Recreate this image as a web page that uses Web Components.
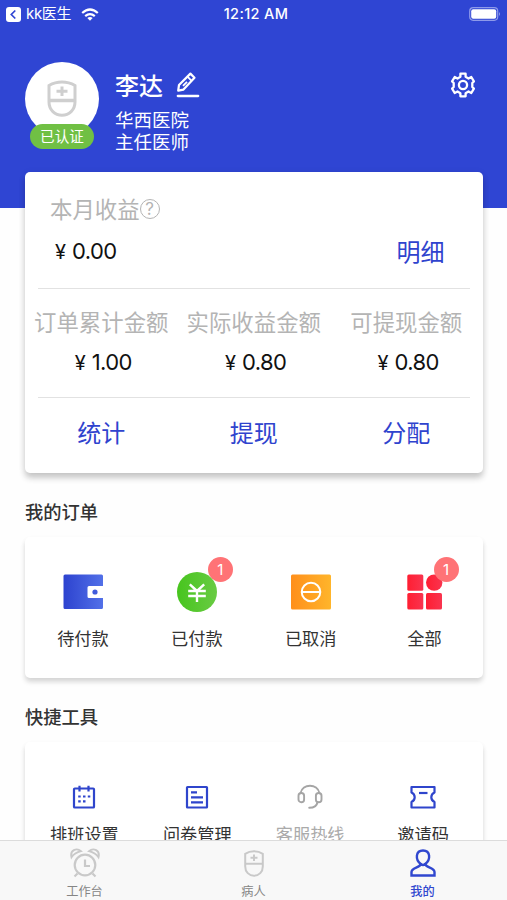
<!DOCTYPE html>
<html lang="zh-CN">
<head>
<meta charset="utf-8">
<title>我的</title>
<style>
html,body{margin:0;padding:0;background:#fefefe}
body{font-family:"Noto Sans CJK SC",sans-serif;color:#333}
</style>
</head>
<body>
<doctor-app></doctor-app>
<script>
const define = (name, html) => customElements.define(name, class extends HTMLElement {
  constructor() {
    super();
    const t = document.createElement('template');
    t.innerHTML = html.replace(/\{\{(\w+)\}\}/g, (_, k) => this.getAttribute(k) || '');
    this.attachShadow({ mode: 'open' }).append(t.content.cloneNode(true));
  }
});

const icons = {
  back: [15, 15, `<rect width="15" height="15" rx="3" fill="#fff"/><path d="M9.300 3.500L5.300 7.500L9.300 11.500" fill="none" stroke="#3045d3" stroke-width="1.700"/>`],
  wifi: [18, 13, `<g fill="none" stroke="#fff" stroke-width="2.200"><path d="M1.200 5Q9-2 16.800 5"/><path d="M4.200 8.200Q9 4 13.800 8.200"/></g><path d="M6.300 10.100Q9 8 11.700 10.100L9 12.800Z" fill="#fff"/>`],
  battery: [32, 14, `<rect x=".7" y=".7" width="28" height="12.600" rx="3.500" fill="none" stroke="#8e9aea" stroke-width="1.200"/><rect x="2.200" y="2.300" width="25" height="9.400" rx="2" fill="#fff"/><path d="M30 5Q32 7 30 9Z" fill="#8e9aea"/>`],
  edit: [24, 26, `<g fill="none" stroke="#fff" stroke-width="2.200" stroke-linejoin="round"><path d="M2.200 18.600L3 13L14.400 1.600L18.500 5.700L7.500 17.600Z"/><path d="M11.500 4.700L15.600 8.800M7 13.900L11 9.900" stroke-width="1.800"/><path d="M1.800 24H22.200" stroke-width="2.300" stroke-linecap="round"/></g>`],
  gear: [26, 26, `<g fill="none" stroke="#fff" stroke-width="2.300" stroke-linejoin="round"><path d="M10.400 1.700H15.600V4.800L18.500 6.500L21.300 5L23.900 9.400L22.300 11V15L23.900 16.600L21.300 21L18.500 19.500L15.600 21.200V24.300H10.400V21.200L7.500 19.500L4.700 21L2.100 16.600L3.700 15V11L2.100 9.400L4.700 5L7.500 6.500L10.400 4.800Z"/><circle cx="13" cy="13" r="4.100"/></g>`],
  wallet: [40, 36, `<defs><linearGradient id="g"><stop stop-color="#2d43cf"/><stop offset="1" stop-color="#5270e8"/></linearGradient></defs><path d="M2 .5H38.500Q40 .5 40 2V12H26Q24.500 12 24.500 13.500V22.500Q24.500 24 26 24H40V33.500Q40 35 38.500 35H2Q.5 35 .5 33.500V2Q.5 .5 2 .5Z" fill="url(#g)"/><circle cx="32" cy="18" r="2.600" fill="#405bdc"/>`],
  paid: [40, 40, `<defs><linearGradient id="g"><stop stop-color="#47c51e"/><stop offset="1" stop-color="#69cb43"/></linearGradient></defs><circle cx="20" cy="20" r="20" fill="url(#g)"/><path d="M12.800 12.300L20 19L27.200 12.300M11.200 19H28.800M11.200 24H28.800M20 19V30" fill="none" stroke="#fff" stroke-width="2.400"/>`],
  cancel: [40, 36, `<defs><linearGradient id="g"><stop stop-color="#ff8f1b"/><stop offset="1" stop-color="#ffb52b"/></linearGradient></defs><rect y=".5" width="40" height="35" rx="1.500" fill="url(#g)"/><g fill="none" stroke="#fff" stroke-width="2"><circle cx="20" cy="18" r="9.300"/><path d="M11 18H29"/></g>`],
  all: [36, 36, `<defs><linearGradient id="g"><stop stop-color="#ff1e32"/><stop offset="1" stop-color="#f9344f"/></linearGradient></defs><g fill="url(#g)"><rect x=".3" y=".5" width="16" height="16.300" rx="1.500"/><rect x=".3" y="19" width="16" height="16.500" rx="1.500"/><rect x="19" y="19" width="16" height="16.500" rx="1.500"/><circle cx="27.200" cy="8.600" r="8.200"/></g>`],
  calendar: [24, 24, `<g fill="none" stroke="#2f45cc" stroke-width="2.200"><rect x="2" y="3.500" width="20" height="19" rx=".8"/><path d="M7.500 .7V6.500M16.500 .7V6.500M6.200 11.500H8.700M11 11.500H13.500M15.800 11.500H18.300M6.200 16.300H8.700M11 16.300H13.500"/></g>`],
  form: [24, 24, `<g fill="none" stroke="#2f45cc" stroke-width="2.200"><rect x="2" y="2" width="20" height="20.500" rx=".5"/><path d="M6 7.300H12M6 12.300H18M6 17.300H18"/></g>`],
  headset: [26, 26, `<g fill="none" stroke="#a5a5a5" stroke-width="1.900"><rect x="1.500" y="9" width="5.600" height="9.200" rx="2.800"/><rect x="18.900" y="9" width="5.600" height="9.200" rx="2.800"/><path d="M3.500 9.300C5.500-.8 20.500-.8 22.500 9.300M20.500 18C20 21.700 17.500 23.800 12.200 23.800" stroke-linecap="round"/></g>`],
  ticket: [26, 24, `<g fill="none" stroke="#2f45cc" stroke-width="2.200" stroke-linejoin="round"><path d="M1.500 2H24.500V7.500Q21.300 9 21.300 12.200T24.500 17V22.500H1.500V17Q4.700 15.400 4.700 12.200Q4.700 9 1.500 7.500Z"/><path d="M9 8H17.500"/></g>`.replace('T24.500 17', 'Q21.300 15.400 24.500 17')],
  alarm: [30, 30, `<g fill="none" stroke="#c9c9c9" stroke-width="2.200"><circle cx="15" cy="17" r="10.300"/><path d="M15 11.500V18H20M7.500 25.500L4.500 28.500M22.500 25.500L25.500 28.500"/><path d="M1.500 9.200C-.3 2.500 6.500-.8 11 3.200Q4.500 5 1.500 9.200ZM28.500 9.200C30.300 2.500 23.500-.8 19 3.200Q25.500 5 28.500 9.200Z" stroke-width="1.900"/></g>`],
  avatar: [30, 37, `<g fill="none" stroke="#cfcfcf" stroke-width="3"><path d="M2 5.500Q8 2 15 2T28 5.500V22C28 30 22 35.200 15 35.200S2 30 2 22Z"/><path d="M2 20.500H28" stroke-width="3.500"/><path d="M15 6.500V16M9.500 11.300H20.500"/></g>`],
  patient: [20, 27, `<g fill="none" stroke="#c9c9c9" stroke-width="2"><path d="M1.200 3.800Q5 1.200 10 1.200T18.800 3.800V16.500C18.800 22 15 25.700 10 25.700S1.200 22 1.200 16.500Z"/><path d="M1.200 13.700H18.800M10 4.500V11M6.500 7.800H13.500"/></g>`],
  person: [26, 28, `<path d="M10.800 15C5 10.500 5.500 1.500 13 1.500S21 10.500 15.200 15C16 19 24.500 18.500 24.500 23V26.500H1.500V23C1.500 18.500 10 19 10.800 15ZM10.800 15Q13 17 15.200 15" fill="none" stroke="#3047cf" stroke-width="2.400"/>`]
};

customElements.define('ui-icon', class extends HTMLElement {
  constructor() {
    super();
    const [w, h, art] = icons[this.getAttribute('name')];
    this.attachShadow({ mode: 'open' }).innerHTML =
      `<style>:host{display:block;flex:none}svg{display:block}</style>
       <svg width="${w}" height="${h}" viewBox="0 0 ${w} ${h}">${art}</svg>`;
  }
});

define('status-bar', `
<style>
:host{display:grid;grid-template-columns:1fr auto 1fr;align-items:center;height:28px;padding:0 6px;color:#fff;font:15px/28px Inter,"Noto Sans CJK SC",sans-serif;box-sizing:border-box}
.left{display:flex;align-items:center;gap:5px}
.left span{letter-spacing:-.3px}
.left ui-icon:last-child{margin-left:5px}
.time{font-weight:500;font-size:14.500px;letter-spacing:.35px;padding-left:5px}
.right{justify-self:end}
</style>
<div class="left"><ui-icon name="back"></ui-icon><span>kk医生</span><ui-icon name="wifi"></ui-icon></div>
<div class="time">12:12 AM</div><ui-icon class="right" name="battery"></ui-icon>`);

define('profile-header', `
<style>
:host{display:flex;height:144px;padding:34px 31px 0 25px;box-sizing:border-box;color:#fff}
.photo{position:relative;width:74px;height:74px;border-radius:50%;background:#fff;display:flex;justify-content:center;padding-top:18px;box-sizing:border-box}
.tag{position:absolute;left:5px;top:62px;width:64px;height:25px;border-radius:13px;background:#70c044;font-size:14.600px;line-height:24px;text-align:center}
.info{flex:1;margin-left:16px}
.name{display:flex;align-items:center;gap:13px;height:45px;margin-bottom:1px;font-size:24px;line-height:45px;font-weight:500}
.line{font-size:18.500px;line-height:22px;height:22px}
.gear{margin-top:10px}
</style>
<div class="photo"><ui-icon name="avatar"></ui-icon><div class="tag"><slot name="tag"></slot></div></div>
<div class="info"><div class="name"><slot name="name"></slot><ui-icon name="edit"></ui-icon></div>
<div class="line"><slot name="hospital"></slot></div><div class="line"><slot name="title"></slot></div></div>
<ui-icon class="gear" name="gear"></ui-icon>`);

define('money-amount', `
<style>
:host{display:flex;justify-content:center;align-items:baseline;gap:6px;font:22px/30px Inter,sans-serif;letter-spacing:-.6px;color:#111}
.yen{font-size:20px;letter-spacing:0}
</style><span class="yen">¥</span><span><slot></slot></span>`);

define('metric-cell', `
<style>
:host{display:flex;flex-direction:column;align-items:center}
.label{font-size:22.400px;line-height:32px;color:#b4b4b4;white-space:nowrap}
money-amount{margin-top:10px;padding-left:4px}
</style><div class="label">{{label}}</div><money-amount><slot></slot></money-amount>`);

define('income-card', `
<style>
:host{display:block;margin:0 24.500px 0 25px;height:301px;background:#fff;border-radius:5px;box-shadow:0 5px 6px rgba(0,0,0,.2),0 1px 8px rgba(0,0,0,.06);box-sizing:border-box;padding-top:19px}
.month{display:flex;align-items:center;padding-left:25px;height:34px;font-size:22.400px;color:#b4b4b4}
.q{width:18px;height:18px;margin-top:2px;border:1.300px solid #b4b4b4;border-radius:50%;font:17px/18px Inter,sans-serif;text-align:center}
.sum{display:flex;justify-content:space-between;align-items:center;height:50px;margin-top:1px;padding:0 38px 0 30px}
.link{font-size:24px;line-height:34px;color:#2f43ce}
.sum .link{margin-top:-1px}
hr{border:0;height:1px;background:#e2e2e2;margin:0 13px}
.hr1{margin-top:12px}
.grid{display:grid;grid-template-columns:repeat(3,1fr)}
.metrics{height:108px;padding-top:16px;box-sizing:border-box}
.links{padding-top:17px;text-align:center}
</style>
<div class="month"><span>本月收益</span><span class="q">?</span></div>
<div class="sum"><money-amount>0.00</money-amount><span class="link">明细</span></div>
<hr class="hr1">
<div class="grid metrics"><metric-cell label="订单累计金额">1.00</metric-cell><metric-cell label="实际收益金额">0.80</metric-cell><metric-cell label="可提现金额">0.80</metric-cell></div>
<hr>
<div class="grid links"><span class="link">统计</span><span class="link">提现</span><span class="link">分配</span></div>`);

define('panel-section', `
<style>
:host{display:block;margin:0 24.500px 0 25px}
h2{margin:0;font-size:18.300px;line-height:28px;font-weight:500;color:#333}
.card{display:grid;grid-template-columns:repeat(4,1fr);margin-top:12px;height:var(--card-h);padding:0 var(--pad,1px);background:#fff;border-radius:5px;box-shadow:0 4px 5px rgba(0,0,0,.14),0 2px 6px rgba(0,0,0,.03);box-sizing:border-box}
</style><h2>{{heading}}</h2><div class="card"><slot></slot></div>`);

define('grid-item', `
<style>
:host{display:flex;flex-direction:column;align-items:center;padding-top:35px;font-size:17.200px;color:#333}
.art{position:relative;height:40px;display:flex;align-items:center}
.label{margin-top:var(--gap,13px);line-height:26px;white-space:nowrap}
::slotted(b){position:absolute;left:calc(100% - 9px);top:-15px;width:25px;height:25px;border-radius:50%;background:#ff7376;color:#fff;font:400 15px/25px Inter,sans-serif;text-align:center}
</style><div class="art"><ui-icon name="{{icon}}"></ui-icon><slot name="badge"></slot></div><div class="label"><slot></slot></div>`);

define('tab-item', `
<style>
:host{display:flex;flex-direction:column;align-items:center;font-size:12.200px;color:#858585}
.art{height:30px;margin-top:7px;display:flex;align-items:center}
.label{line-height:18px;margin-top:4px}
</style><div class="art"><ui-icon name="{{icon}}"></ui-icon></div><div class="label"><slot></slot></div>`);

define('tab-bar', `
<style>
:host{display:grid;grid-template-columns:repeat(3,1fr);height:60px;flex:none;box-sizing:border-box;border-top:1px solid #dcdcdc;background:#f8f8f8}
.on{color:#3047cf;font-weight:500}
</style>
<tab-item icon="alarm">工作台</tab-item><tab-item icon="patient">病人</tab-item><tab-item class="on" icon="person">我的</tab-item>`);

define('doctor-app', `
<style>
:host{display:flex;flex-direction:column;width:507px;height:900px;overflow:hidden}
main{flex:1;min-height:0;overflow:hidden;background:linear-gradient(#2f45d3 208.500px,#fefefe 208.500px)}
.orders{margin-top:24px;--card-h:141px}
.tools{margin-top:24px;--card-h:200px;--pad:3px}
.tools grid-item{--gap:4px}
.dim{color:#aaa}
</style>
<main>
<status-bar></status-bar>
<profile-header><span slot="name">李达</span><span slot="tag">已认证</span><span slot="hospital">华西医院</span><span slot="title">主任医师</span></profile-header>
<income-card></income-card>
<panel-section class="orders" heading="我的订单">
<grid-item icon="wallet">待付款</grid-item>
<grid-item icon="paid"><b slot="badge">1</b>已付款</grid-item>
<grid-item icon="cancel">已取消</grid-item>
<grid-item icon="all"><b slot="badge">1</b>全部</grid-item>
</panel-section>
<panel-section class="tools" heading="快捷工具">
<grid-item icon="calendar">排班设置</grid-item>
<grid-item icon="form">问卷管理</grid-item>
<grid-item class="dim" icon="headset">客服热线</grid-item>
<grid-item icon="ticket">邀请码</grid-item>
</panel-section>
</main>
<tab-bar></tab-bar>`);
</script>
</body>
</html>
